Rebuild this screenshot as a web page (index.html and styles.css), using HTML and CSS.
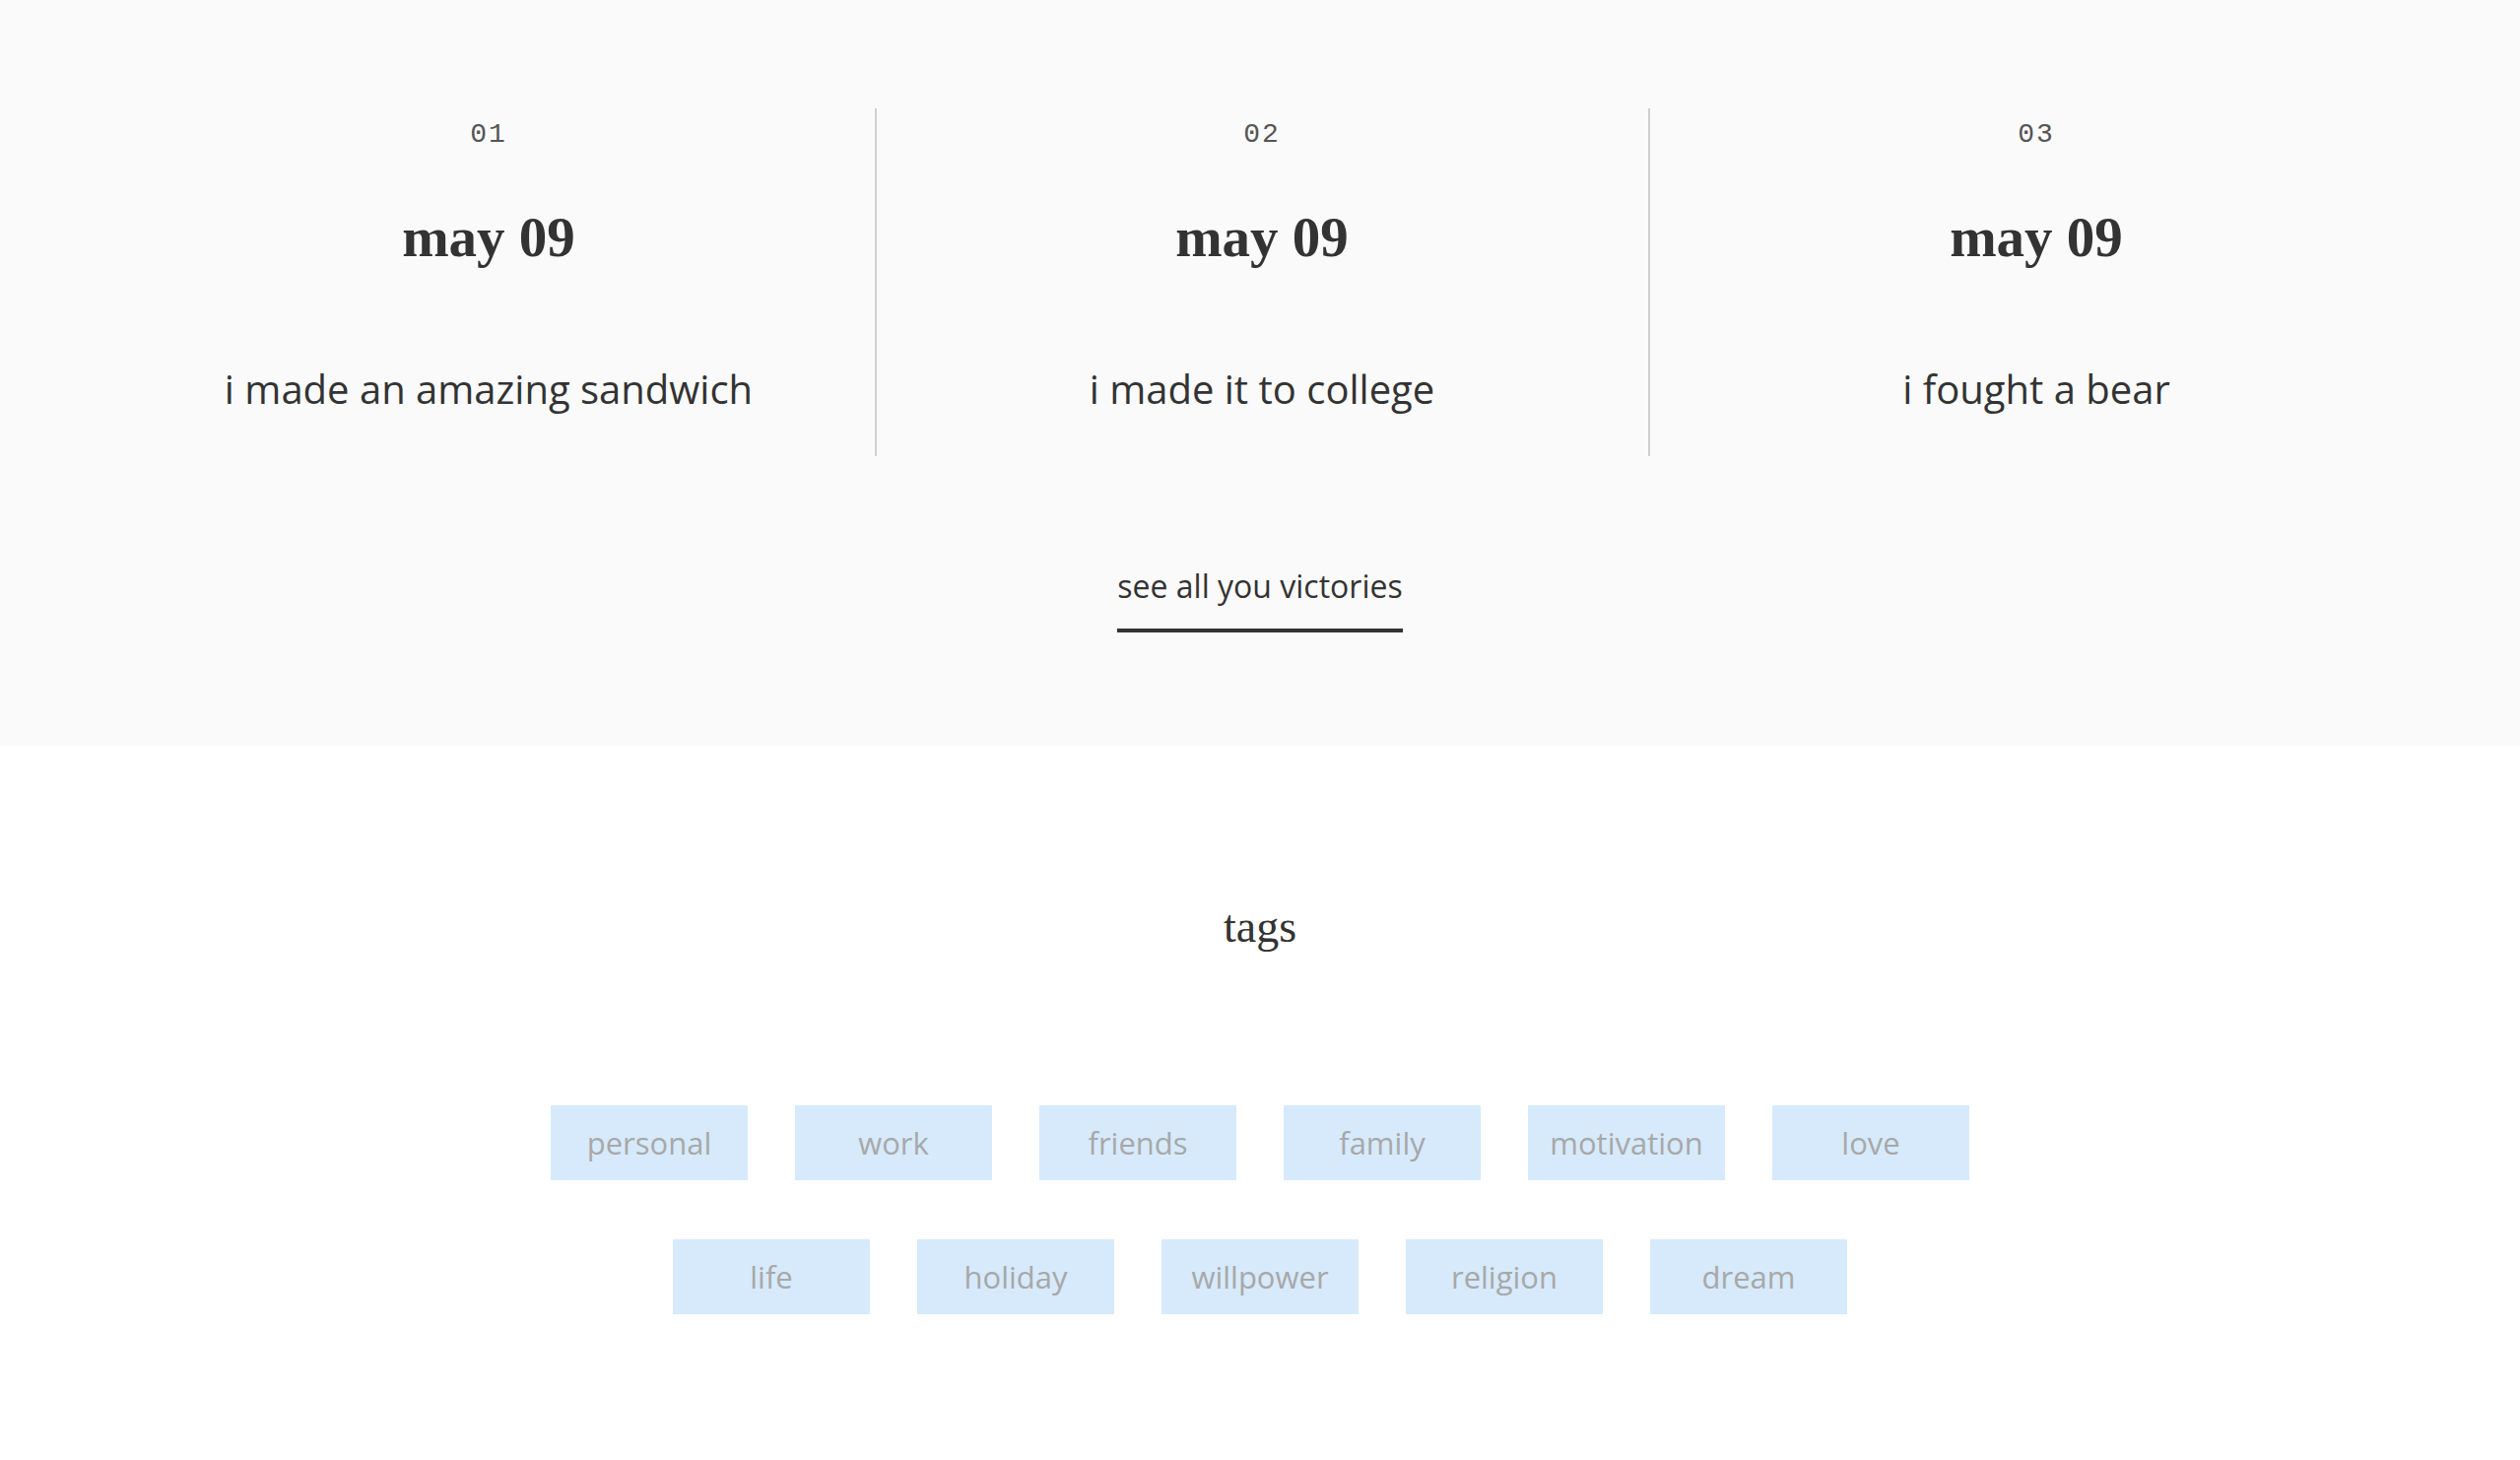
FILE: index.html
```html
<!DOCTYPE html>
<html>
<head>
<meta charset="utf-8">
<link rel="stylesheet" href="styles.css">
</head>
<body>
<section class="victories">
  <div class="columns">
    <div class="col">
      <div class="num">01</div>
      <div class="date">may 09</div>
      <div class="desc">i made an amazing sandwich</div>
    </div>
    <div class="col">
      <div class="num">02</div>
      <div class="date">may 09</div>
      <div class="desc">i made it to college</div>
    </div>
    <div class="col">
      <div class="num">03</div>
      <div class="date">may 09</div>
      <div class="desc">i fought a bear</div>
    </div>
  </div>
  <div class="link-row"><a class="see-all" href="#">see all you victories</a></div>
</section>
<section class="tags">
  <h2 class="tags-title">tags</h2>
  <div class="tag-list">
    <span class="tag">personal</span>
    <span class="tag">work</span>
    <span class="tag">friends</span>
    <span class="tag">family</span>
    <span class="tag">motivation</span>
    <span class="tag">love</span>
    <span class="tag">life</span>
    <span class="tag">holiday</span>
    <span class="tag">willpower</span>
    <span class="tag">religion</span>
    <span class="tag">dream</span>
  </div>
</section>
</body>
</html>
```
FILE: styles.css
```css
html, body {
  margin: 0;
  padding: 0;
  background: #ffffff;
}
body {
  font-family: "Open Sans", "Liberation Sans", sans-serif;
  color: #333333;
}
.victories {
  background: #fafafa;
  padding: 110px 0 115px;
}
.columns {
  display: grid;
  grid-template-columns: repeat(3, 785px);
  justify-content: center;
  padding-left: 6px;
}
.col {
  text-align: center;
  padding: 12px 0 43px;
  border-right: 2px solid #cfcfcf;
}
.col:last-child {
  border-right: none;
}
.num {
  font-family: "Liberation Mono", "DejaVu Sans Mono", monospace;
  font-size: 28px;
  line-height: 30px;
  letter-spacing: 2px;
  color: #555555;
}
.date {
  font-family: "Liberation Serif", "DejaVu Serif", serif;
  font-weight: bold;
  font-size: 57px;
  line-height: 64px;
  margin-top: 57px;
  color: #333333;
}
.desc {
  font-size: 40px;
  line-height: 50px;
  margin-top: 97px;
  color: #333333;
}
.link-row {
  display: flex;
  justify-content: center;
  margin-top: 112px;
}
.see-all {
  font-size: 32px;
  line-height: 40px;
  color: #333333;
  text-decoration: none;
  padding-bottom: 23px;
  border-bottom: 4px solid #333333;
}
.tags {
  padding: 159px 0 148px;
}
.tags-title {
  margin: 0;
  text-align: center;
  font-family: "Liberation Serif", "DejaVu Serif", serif;
  font-weight: normal;
  font-size: 46px;
  line-height: 50px;
  color: #333333;
}
.tag-list {
  width: 1440px;
  margin: 156px auto 0;
  display: flex;
  flex-wrap: wrap;
  justify-content: center;
  column-gap: 48px;
  row-gap: 60px;
}
.tag {
  width: 200px;
  height: 76px;
  background: #d6eafc;
  color: #a8a8a8;
  font-size: 31px;
  display: flex;
  align-items: center;
  justify-content: center;
}
```
